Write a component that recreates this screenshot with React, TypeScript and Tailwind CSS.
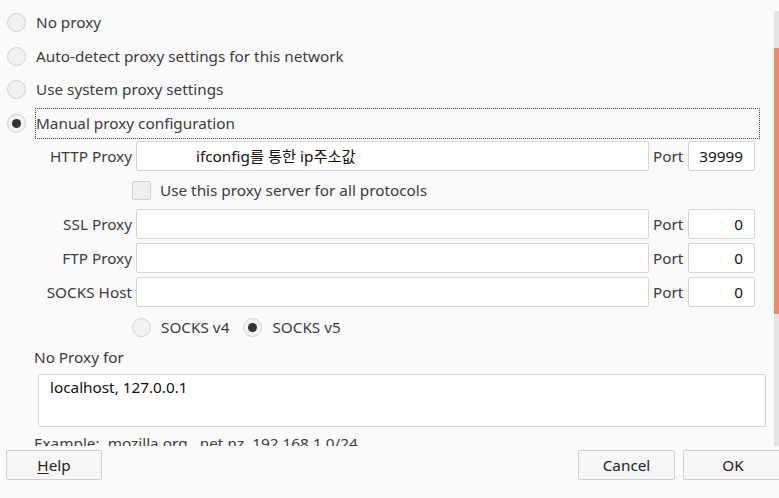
import React from "react";

const FONT = { fontFamily: '"Noto Sans", "Noto Sans CJK KR", sans-serif' };

function Radio({ checked = false }: { checked?: boolean }) {
  return (
    <span className="flex h-[19px] w-[19px] shrink-0 items-center justify-center rounded-full border border-[#d2d2d2] bg-[#f1f1f1]">
      {checked && <span className="h-[9px] w-[9px] rounded-full bg-[#333333]" />}
    </span>
  );
}

function RadioRow({ label, checked, focused }: { label: string; checked?: boolean; focused?: boolean }) {
  return (
    <div className="flex h-[33.5px] items-center">
      <div className="flex w-[28px] justify-start">
        <Radio checked={checked} />
      </div>
      <span
        className={`flex h-[31px] items-center ${
          focused ? "w-[725px] border border-dotted border-[#444444]" : "border border-transparent"
        }`}
      >
        {label}
      </span>
    </div>
  );
}

function ProxyRow({ label, value, port, className = "" }: { label: string; value?: string; port: string; className?: string }) {
  return (
    <div className={`flex h-[30px] items-center ${className}`}>
      <span className="w-[125px] shrink-0 whitespace-nowrap text-right">{label}</span>
      <div className="ml-[4px] flex h-[30px] w-[513px] items-center rounded-[2px] border border-[#d5d5d5] bg-white pl-[59px] text-[#111111]">
        {value}
      </div>
      <span className="ml-[4px] w-[33px]">Port</span>
      <div className="ml-[2px] flex h-[30px] w-[67px] items-center justify-end rounded-[2px] border border-[#d5d5d5] bg-white pr-[11px] text-[#111111]">
        {port}
      </div>
    </div>
  );
}

function Button({ children, className = "" }: { children: React.ReactNode; className?: string }) {
  return (
    <div
      className={`flex h-[30px] items-center justify-center rounded-[2px] border border-[#d0d0d0] bg-[#f6f6f6] text-[#222222] ${className}`}
    >
      {children}
    </div>
  );
}

export default function App() {
  return (
    <div className="h-[498px] w-[779px] overflow-hidden bg-[#fafafa] text-[15.3px] text-[#3c3c3c]" style={FONT}>
      <div className="flex h-[446px]">
        <div className="flex-1 overflow-hidden pl-[7px] pt-[6px]">
          <RadioRow label="No proxy" />
          <RadioRow label="Auto-detect proxy settings for this network" />
          <RadioRow label="Use system proxy settings" />
          <RadioRow label="Manual proxy configuration" checked focused />

          <ProxyRow label="HTTP Proxy" value="ifconfig를 통한 ip주소값" port="39999" className="mt-[1px]" />

          <div className="flex h-[38px] items-center pl-[125px]">
            <span className="h-[19px] w-[19px] rounded-[2px] border border-[#d2d2d2] bg-[#efefef]" />
            <span className="ml-[9px]">Use this proxy server for all protocols</span>
          </div>

          <div className="flex flex-col gap-[4px]">
            <ProxyRow label="SSL Proxy" port="0" />
            <ProxyRow label="FTP Proxy" port="0" />
            <ProxyRow label="SOCKS Host" port="0" />
          </div>

          <div className="flex h-[40px] items-center pl-[125px]">
            <Radio />
            <span className="ml-[10px]">SOCKS v4</span>
            <span className="ml-[14px]">
              <Radio checked />
            </span>
            <span className="ml-[10px]">SOCKS v5</span>
          </div>

          <div className="pl-[27px]">
            <div className="flex h-[20px] items-center">No Proxy for</div>
            <div className="ml-[4px] mt-[7px] h-[53px] w-[728px] rounded-[2px] border border-[#d5d5d5] bg-white pl-[11px] pt-[1px] text-[#111111]">
              localhost, 127.0.0.1
            </div>
            <div className="mt-[5px] whitespace-nowrap">Example: .mozilla.org, .net.nz, 192.168.1.0/24</div>
          </div>
        </div>

        <div className="mt-[11px] flex h-[435px] w-[5px] flex-col bg-[#e4e4e4]">
          <div className="h-[37px]" />
          <div className="h-[266px] bg-[#ef8b62]" />
        </div>
      </div>

      <div className="mt-[4px] flex items-center pl-[6px]">
        <Button className="w-[96px]">
          <span>
            <span className="underline decoration-1 underline-offset-2">H</span>elp
          </span>
        </Button>
        <Button className="ml-auto w-[97px]">Cancel</Button>
        <Button className="ml-[8px] mr-[-4px] w-[100px]">OK</Button>
      </div>
    </div>
  );
}
